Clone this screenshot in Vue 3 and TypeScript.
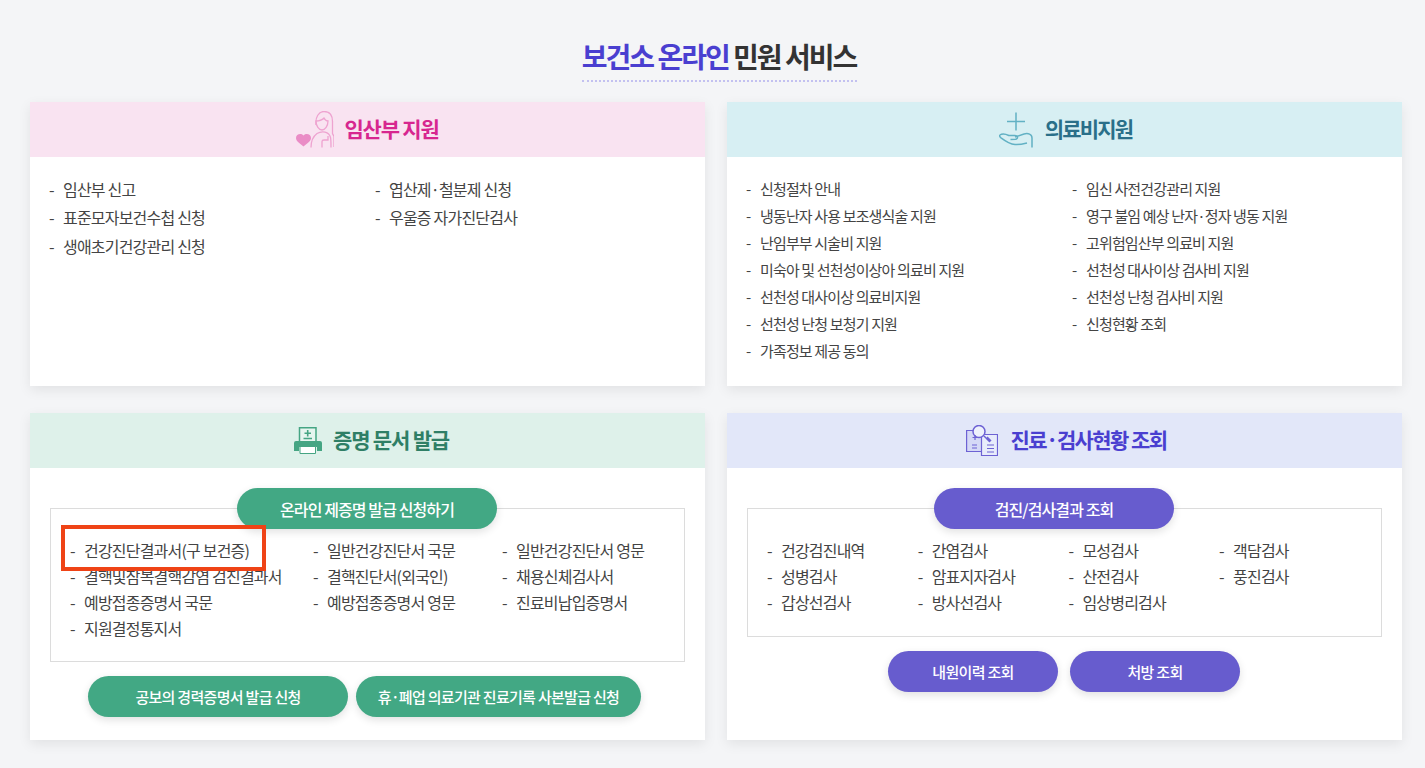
<script setup lang="ts">
const preg: string[] = ['임산부 신고','엽산제·철분제 신청','표준모자보건수첩 신청','우울증 자가진단검사','생애초기건강관리 신청'];
const med: string[] = ['신청절차 안내','임신 사전건강관리 지원','냉동난자 사용 보조생식술 지원','영구 불임 예상 난자·정자 냉동 지원','난임부부 시술비 지원','고위험임산부 의료비 지원','미숙아 및 선천성이상아 의료비 지원','선천성 대사이상 검사비 지원','선천성 대사이상 의료비지원','선천성 난청 검사비 지원','선천성 난청 보청기 지원','신청현황 조회','가족정보 제공 동의'];
const cert: string[] = ['건강진단결과서(구 보건증)','일반건강진단서 국문','일반건강진단서 영문','결핵및잠복결핵감염 검진결과서','결핵진단서(외국인)','채용신체검사서','예방접종증명서 국문','예방접종증명서 영문','진료비납입증명서','지원결정통지서'];
const exam: string[] = ['건강검진내역','간염검사','모성검사','객담검사','성병검사','암표지자검사','산전검사','풍진검사','갑상선검사','방사선검사','임상병리검사'];
</script>

<template>
  <main class="page">
    <h1 class="title"><span class="accent">보건소 온라인</span> 민원 서비스</h1>
    <div class="grid">
      <section class="card top">
        <header class="head pink">
          <svg class="ico" width="38" height="37" viewBox="0 0 38 37" fill="none" stroke="#eea3d0" stroke-width="1.300">
            <path d="M0 27c0-3.500 4.500-5.500 7.500-2.500 3-3 7.500-1 7.500 2.500 0 3.500-4.500 5.500-7.500 8.500-3-3-7.500-5-7.500-8.500z" fill="#ea8cc6" stroke="none"/>
            <path d="M15 36.500c0-6 2-11 6-14 5-3 12-2 13.500 4 .5 2 .5 6 .5 10"/>
            <path d="M20 14c-1-8 3-13.500 8-13.500 6 0 8.500 4.500 8.500 10v12l1.500 3v10.500"/>
            <path d="M20 10c3 0 6-1 8-3 1 2 3 3 4 3 0 5-3 9-6 9-3 0-6-4-6-9z"/>
            <path d="M26 36.500v-6c0-1 1-1.500 2-1.500h4v-4"/>
          </svg>
          <span class="pinkt">임산부 지원</span>
        </header>
        <ul class="list two pregl"><li v-for="t in preg" :key="t">{{ t }}</li></ul>
      </section>

      <section class="card top">
        <header class="head teal">
          <svg class="ico" width="34" height="36" viewBox="0 0 34 36" fill="none" stroke="#62b1c4" stroke-width="1.500">
            <path d="M17 0.500v18M8 9.500h18"/>
            <path d="M0.800 23c3-2 6-1 9 .5h6.200c3 0 3.500 3.500.5 3.800l-5 .2"/>
            <path d="M16 25l9-3c4-1 8 0 8 4v9.500"/>
            <path d="M0.800 23c-.5 1 .2 2 1.200 2.800 4 3 9 6.200 14 6.700 4 .3 8-.5 12-1.500"/>
          </svg>
          <span class="tealt">의료비지원</span>
        </header>
        <ul class="list two medl"><li v-for="t in med" :key="t">{{ t }}</li></ul>
      </section>

      <section class="card bot">
        <header class="head green">
          <svg class="ico" width="28" height="27" viewBox="0 0 28 27">
            <path d="M5.500 0.800h16.500v15H5.500z" fill="#e6f5ef" stroke="#45a583" stroke-width="1.500"/>
            <path d="M13.700 3v6.500M10.500 6.200h6.500M9.500 11.500h8.500" stroke="#45a583" stroke-width="1.600" fill="none"/>
            <path d="M2 14h24a2 2 0 0 1 2 2v8h-5v-4H5v4H0v-8a2 2 0 0 1 2-2z" fill="#45a583"/>
            <path d="M6 19.500h15.500v7H6z" fill="#fff" stroke="#45a583" stroke-width="1"/>
          </svg>
          <span class="greent">증명 문서 발급</span>
        </header>
        <div class="panel">
          <a class="pill gbtn main w260 big">온라인 제증명 발급 신청하기</a>
          <ul class="list certl"><li v-for="t in cert" :key="t">{{ t }}</li></ul>
        </div>
        <div class="after left">
          <a class="pill gbtn w260">공보의 경력증명서 발급 신청</a>
          <a class="pill gbtn w285">휴·폐업 의료기관 진료기록 사본발급 신청</a>
        </div>
        <div class="mark"></div>
      </section>

      <section class="card bot">
        <header class="head blue">
          <svg class="ico" width="32" height="31" viewBox="0 0 32 31" fill="none" stroke="#6d62d4" stroke-width="1.200">
            <path d="M0.600 5.500h15.500v21H0.600z" fill="#d5d9f6"/>
            <path d="M15.500 9.500h16v21h-16z" fill="#e8ecfb"/>
            <circle cx="13" cy="6.500" r="6" fill="#eef1fc" stroke-width="1.500"/>
            <path d="M18 11l2 2" stroke-width="1.500"/>
            <path d="M20.500 12.500l4 4" stroke-width="3"/>
            <path d="M6.500 12.500h5M9 10v5M6 20h5M6 23h5M21 20h7M21 23.500h7M21 27h7"/>
          </svg>
          <span class="bluet">진료·검사현황 조회</span>
        </header>
        <div class="panel">
          <a class="pill pbtn main w240 big">검진/검사결과 조회</a>
          <ul class="list examl"><li v-for="t in exam" :key="t">{{ t }}</li></ul>
        </div>
        <div class="after right">
          <a class="pill pbtn w170">내원이력 조회</a>
          <a class="pill pbtn w170">처방 조회</a>
        </div>
      </section>
    </div>
  </main>
</template>

<style>
html, body { margin: 0; background: #f4f5f7; }
</style>

<style scoped>
.page {
  height: 768px;
  box-sizing: border-box;
  overflow: hidden;
  padding: 36px 23px 0 30px;
  background: #f4f5f7;
  font-family: "Noto Sans CJK KR", "Noto Sans", sans-serif;
  color: #333;
}
.title {
  display: block;
  width: 275px;
  height: 46px;
  box-sizing: border-box;
  margin: 0 auto 20px;
  transform: translateX(3px);
  border-bottom: 2px dotted #c3c1f0;
  font-size: 28px;
  line-height: 40px;
  font-weight: 700;
  letter-spacing: -2px;
  text-align: center;
  white-space: nowrap;
  color: #333;
}
.accent { color: #4a3fd0; }
.grid {
  display: grid;
  grid-template-columns: 675px 675px;
  grid-template-rows: 284px 327px;
  column-gap: 22px;
  row-gap: 27px;
}
.card {
  position: relative;
  background: #fff;
  box-shadow: 0 4px 12px rgba(0, 0, 0, 0.08);
}
.head {
  height: 55px;
  display: flex;
  align-items: center;
  justify-content: center;
  font-size: 21px;
  font-weight: 700;
  letter-spacing: -1.200px;
}
.head span { position: relative; top: -2px; }
.ico { margin-right: 10px; flex: none; }
.pink { background: #f9e3f1; }
.teal { background: #d7eff3; padding-left: 2px; letter-spacing: -1.800px; }
.teal .ico { margin-right: 12px; }
.green { background: #def1ea; padding-left: 8px; }
.green .ico { margin-right: 11px; }
.blue { background: #e2e7f9; padding-left: 3px; letter-spacing: -1.600px; }
.blue .ico { margin-right: 13px; }
.pinkt { color: #d7268f; }
.tealt { color: #2a6f89; }
.greent { color: #2f7f66; }
.bluet { color: #4a3fd0; }
.list {
  list-style: none;
  margin: 0;
  padding: 0;
  display: grid;
  font-size: 16px;
  letter-spacing: -0.800px;
  color: #444;
}
.list li {
  position: relative;
  padding-left: 14px;
  white-space: nowrap;
}
.list li::before {
  content: "-";
  position: absolute;
  left: 0;
}
.two { grid-template-columns: 326px 1fr; margin: 18px 0 0 19px; }
.pregl { grid-template-rows: 28px 29px 29px; line-height: 28px; }
.medl { grid-auto-rows: 27px; line-height: 27px; font-size: 15px; letter-spacing: -0.850px; }
.panel {
  position: relative;
  margin: 40px 20px 0;
  border: 1px solid #dcdcdc;
}
.main {
  position: absolute;
  top: -21px;
  left: 186px;
}
.certl {
  grid-template-columns: 243px 189px 1fr;
  grid-auto-rows: 26px;
  line-height: 26px;
  padding: 28px 0 20px 19px;
}
.examl {
  grid-template-columns: repeat(4, 150.700px);
  grid-auto-rows: 26px;
  line-height: 26px;
  padding: 28px 0 21px 19px;
}
.pill {
  display: flex;
  align-items: center;
  justify-content: center;
  height: 41px;
  border-radius: 21px;
  color: #fff;
  font-size: 15px;
  font-weight: 500;
  letter-spacing: -0.700px;
  box-shadow: 0 3px 8px rgba(0, 0, 0, 0.12);
  white-space: nowrap;
}
.big { font-size: 16px; letter-spacing: -0.900px; }
.gbtn { background: #42a884; }
.pbtn { background: #675cce; }
.w170 { width: 170px; }
.w240 { width: 240px; }
.w260 { width: 260px; }
.w285 { width: 285px; }
.after { display: flex; }
.left { gap: 8px; margin: 14px 0 0 58px; }
.right { gap: 12px; margin: 14px 0 0 161px; }
.mark {
  position: absolute;
  left: 31px;
  top: 112px;
  width: 205px;
  height: 46px;
  box-sizing: border-box;
  border: 4px solid #ef4316;
}
</style>
